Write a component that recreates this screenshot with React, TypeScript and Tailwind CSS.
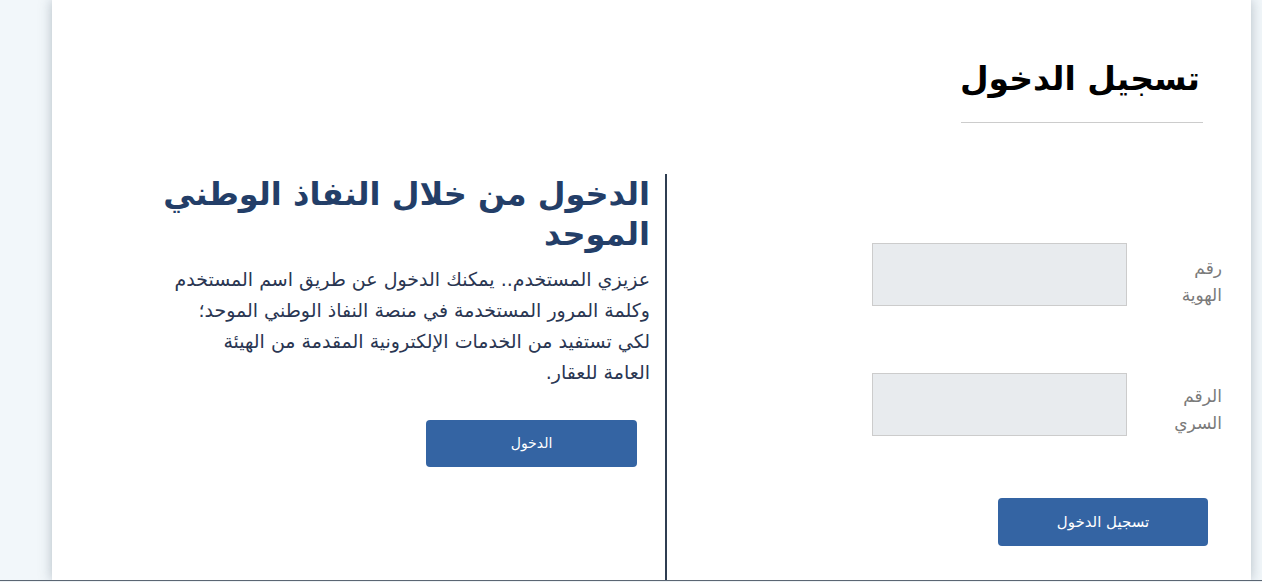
export default function App() {
  return (
    <div
      dir="rtl"
      className="relative h-[582px] w-[1262px] overflow-hidden bg-[#f2f7fa]"
      style={{ fontFamily: '"DejaVu Sans", sans-serif' }}
    >
      <div className="mr-[11px] h-[580px] w-[1199px] bg-white shadow-[0_0_12px_rgba(60,80,100,0.35)]">
        {/* page title */}
        <div className="pr-[48px] pt-[52px]">
          <h1 className="w-[242px] whitespace-nowrap border-b border-[#cccccc] pb-[16px] pr-[3px] text-[33px] font-bold leading-[54px] text-black">
            تسجيل الدخول
          </h1>
        </div>

        <div className="mt-[51px] flex h-[406px]">
          {/* login form */}
          <div className="w-[584px] pr-[29px] pt-[69px]">
            <div className="flex h-[63px] items-start gap-[43px]">
              <label className="w-[52px] whitespace-nowrap pt-[12px] text-[17px] leading-[27px] text-[#7a7a7a]">
                رقم
                <br />
                الهوية
              </label>
              <input className="h-[63px] w-[255px] border border-[#cccccc] bg-[#e8ebee]" />
            </div>
            <div className="mt-[67px] flex h-[63px] items-start gap-[43px]">
              <label className="w-[52px] whitespace-nowrap pt-[10px] text-[17px] leading-[27px] text-[#7a7a7a]">
                الرقم
                <br />
                السري
              </label>
              <input type="password" className="h-[63px] w-[255px] border border-[#cccccc] bg-[#e8ebee]" />
            </div>
            <div className="mr-[14px] mt-[62px]">
              <button className="h-[48px] w-[210px] rounded-[4px] bg-[#3464a3] text-[15px] text-white">
                تسجيل الدخول
              </button>
            </div>
          </div>

          {/* divider */}
          <div className="w-[2px] bg-[#2f3e51]" />

          {/* national access */}
          <div className="w-[520px] pr-[15px]">
            <h2 className="whitespace-nowrap text-[32px] font-bold leading-[40px] text-[#233e68]">
              الدخول من خلال النفاذ الوطني
              <br />
              الموحد
            </h2>
            <p className="mt-[10px] whitespace-nowrap text-[19px] leading-[31px] text-[#2a3652]">
              عزيزي المستخدم.. يمكنك الدخول عن طريق اسم المستخدم
              <br />
              وكلمة المرور المستخدمة في منصة النفاذ الوطني الموحد؛
              <br />
              لكي تستفيد من الخدمات الإلكترونية المقدمة من الهيئة
              <br />
              العامة للعقار.
            </p>
            <div className="mr-[13px] mt-[32px]">
              <button className="h-[47px] w-[211px] rounded-[4px] bg-[#3464a3] text-[14px] text-white">
                الدخول
              </button>
            </div>
          </div>
        </div>
      </div>
      <div className="h-[2px] border-t border-[#5b6673] bg-[#eef2f5]" />
    </div>
  );
}
